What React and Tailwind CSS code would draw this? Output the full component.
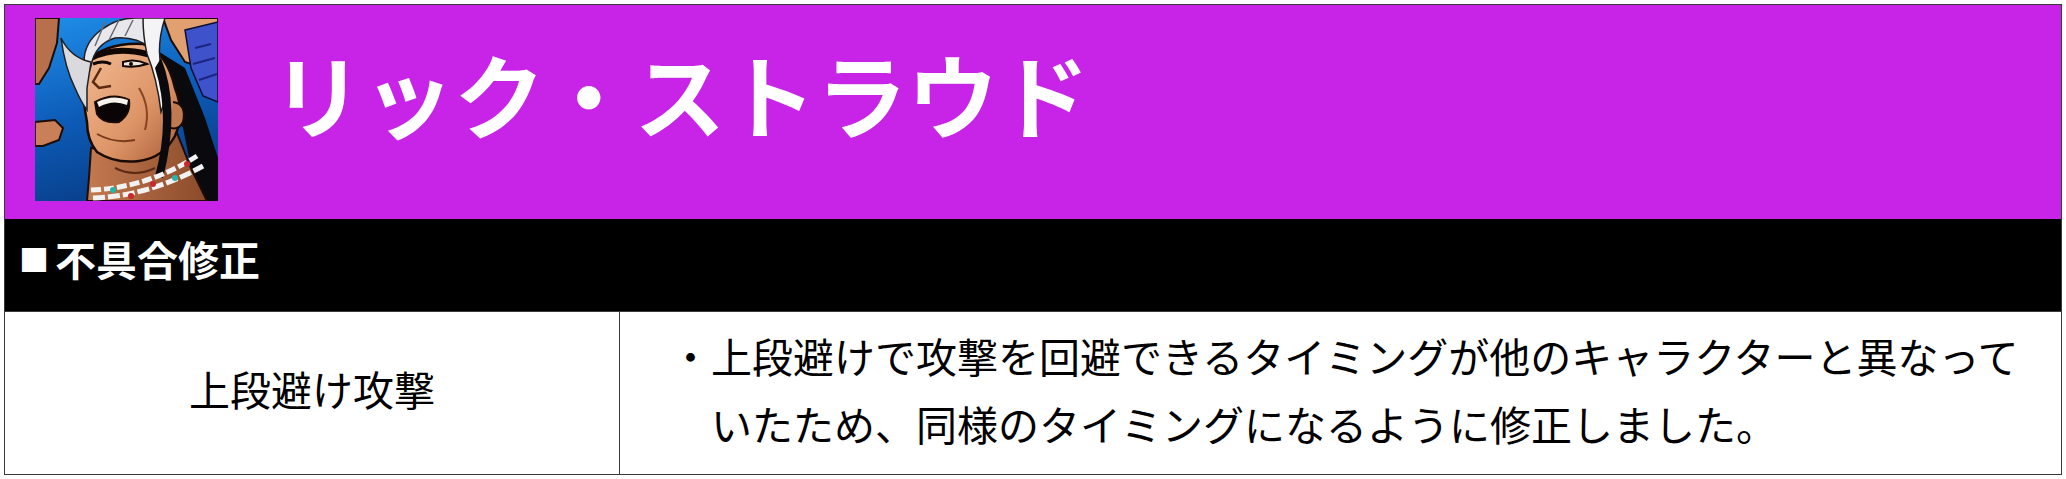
import React from 'react';

const jp = { fontFamily: '"Noto Sans CJK JP", "Noto Sans", sans-serif' };

// portrait of the character, drawn roughly
function Portrait() {
  return (
    <svg viewBox="0 0 183 183" className="w-[183px] h-[183px] block shrink-0">
      <defs>
        <linearGradient id="sky" x1="0" y1="0" x2="0.3" y2="1">
          <stop offset="0" stopColor="#1f8fea" />
          <stop offset="0.55" stopColor="#0d5cb8" />
          <stop offset="1" stopColor="#08408c" />
        </linearGradient>
        <linearGradient id="skin" x1="0" y1="0" x2="1" y2="1">
          <stop offset="0" stopColor="#f4bc94" />
          <stop offset="0.6" stopColor="#dc9466" />
          <stop offset="1" stopColor="#a85c38" />
        </linearGradient>
        <linearGradient id="neck" x1="0" y1="0" x2="1" y2="0">
          <stop offset="0" stopColor="#c47a50" />
          <stop offset="1" stopColor="#8a4a2a" />
        </linearGradient>
      </defs>
      <rect width="183" height="183" fill="url(#sky)" />
      {/* arm and fist on the left */}
      <path d="M0 0 L24 0 L22 25 L14 50 L4 66 L0 66 Z" fill="#b8704c" stroke="#1e0c06" strokeWidth="2" />
      <path d="M0 104 L20 102 L28 110 L24 122 L8 128 L0 128 Z" fill="#c98058" stroke="#1e0c06" strokeWidth="2" />
      {/* raised hand and sleeve top right */}
      <path d="M128 0 L183 0 L183 30 L168 50 L150 44 L136 22 Z" fill="#e0a070" stroke="#1e0c06" strokeWidth="2" />
      <path d="M150 12 L183 4 L183 84 L168 78 L156 50 Z" fill="#3e52cc" stroke="#0c0c30" strokeWidth="1.5" />
      <path d="M160 30 L176 26 M158 46 L180 40 M164 62 L182 56" stroke="#1c2480" strokeWidth="2" />
      {/* long black hair at the right */}
      <path d="M118 30 L150 50 L170 100 L183 140 L183 183 L150 183 L156 150 L148 110 L130 70 Z" fill="#0a0a0e" />
      {/* neck and chest */}
      <path d="M56 130 L110 140 L140 110 L156 150 L172 183 L52 183 L54 160 Z" fill="url(#neck)" stroke="#1e0c06" strokeWidth="2" />
      <path d="M80 150 Q100 160 120 150" stroke="#5a2a14" strokeWidth="2" fill="none" />
      {/* face */}
      <path d="M50 45 Q70 24 108 26 Q132 34 140 70 Q150 95 140 118 Q128 140 104 143 Q80 146 62 134 Q52 122 52 104 Q46 76 50 45 Z" fill="url(#skin)" stroke="#1a0a04" strokeWidth="2.5" />
      {/* ear */}
      <path d="M138 84 Q152 86 148 104 Q144 112 136 110" fill="#c07a50" stroke="#1a0a04" strokeWidth="2" />
      {/* brows and eyes */}
      <path d="M56 40 Q80 28 112 36" stroke="#120602" strokeWidth="6" fill="none" strokeLinecap="round" />
      <path d="M58 46 Q68 42 76 46" stroke="#120602" strokeWidth="3" fill="none" />
      <path d="M88 44 Q100 40 112 46 Q100 50 88 48 Z" fill="#f0e6da" stroke="#120602" strokeWidth="2" />
      <circle cx="96" cy="46" r="2" fill="#120602" />
      {/* nose */}
      <path d="M66 50 L58 64 L64 70 L76 68" stroke="#5a2a12" strokeWidth="2.5" fill="none" />
      {/* open mouth */}
      <path d="M60 84 Q78 74 94 82 Q96 96 84 104 Q68 106 62 96 Z" fill="#0a0406" stroke="#1a0a04" strokeWidth="2" />
      <path d="M62 84 Q78 76 93 82 L92 87 Q78 81 64 89 Z" fill="#f6f2ec" />
      {/* cheek lines */}
      <path d="M104 70 Q116 90 110 112" stroke="#8a4424" strokeWidth="2" fill="none" />
      <path d="M62 116 Q80 126 100 122" stroke="#7a3a1c" strokeWidth="2" fill="none" />
      {/* white hair */}
      <path d="M52 60 Q42 30 66 12 Q82 0 100 0 L130 0 Q118 12 116 30 Q100 18 80 20 Q60 26 56 48 Z" fill="#e8e8ec" stroke="#202024" strokeWidth="1.5" />
      <path d="M70 4 L60 28 M84 2 L74 22 M98 2 L90 18" stroke="#6a6a72" strokeWidth="1.5" />
      <path d="M56 44 Q36 40 26 20 Q30 50 40 70 Q46 84 52 92 L52 70 Z" fill="#dadade" stroke="#202024" strokeWidth="1.5" />
      <path d="M108 0 L130 0 Q120 30 128 60 Q132 80 126 94 Q122 60 112 36 Q108 18 108 0 Z" fill="#f4f4f6" stroke="#202024" strokeWidth="1.5" />
      {/* dark hair strand over shoulder */}
      <path d="M126 40 Q146 90 128 160 L120 158 Q136 100 120 50 Z" fill="#0a0a0e" />
      {/* necklace */}
      <path d="M56 172 Q112 170 162 138" stroke="#f2f2f2" strokeWidth="5" fill="none" strokeDasharray="10 3" />
      <path d="M58 180 Q114 178 168 148" stroke="#f2f2f2" strokeWidth="5" fill="none" strokeDasharray="12 3" />
      <circle cx="78" cy="172" r="3" fill="#2bb3a8" />
      <circle cx="96" cy="178" r="3" fill="#c8282e" />
      <circle cx="118" cy="166" r="3" fill="#c8282e" />
      <circle cx="140" cy="160" r="3" fill="#2bb3a8" />
      <circle cx="152" cy="146" r="3" fill="#c8282e" />
    </svg>
  );
}

export default function App() {
  return (
    <div className="w-[2066px] h-[479px] bg-white pl-[4px] pt-[4px]" style={jp}>
      <div className="w-[2058px] border border-[#3a3a3a]">
        {/* title band */}
        <div className="h-[214px] bg-[#c724e8] flex items-start pl-[30px] pt-[13px]">
          <Portrait />
          <h1 className="ml-[54px] mt-[29px] text-white font-bold text-[91px] leading-none whitespace-nowrap">
            リック・ストラウド
          </h1>
        </div>

        {/* section header */}
        <div className="h-[92px] bg-black flex items-center pl-[14px] pb-[14px] text-white font-bold">
          <span className="text-[30px] leading-none w-[36px]">■</span>
          <span className="text-[41px] leading-none">不具合修正</span>
        </div>

        {/* table row */}
        <div className="flex h-[163px] border-t border-[#3a3a3a]">
          <div className="w-[615px] border-r border-[#3a3a3a] flex items-center justify-center pb-[10px]">
            <span className="text-[41px] leading-none text-black">上段避け攻撃</span>
          </div>
          <div className="flex-1 flex items-center pl-[50px] pr-[16px] pb-[8px]">
            <div className="flex text-[41px] leading-[68px] text-black">
              <span className="w-[41px] shrink-0">・</span>
              <p>
                上段避けで攻撃を回避できるタイミングが他のキャラクターと異なっていたため、同様のタイミングになるように修正しました。
              </p>
            </div>
          </div>
        </div>
      </div>
    </div>
  );
}
